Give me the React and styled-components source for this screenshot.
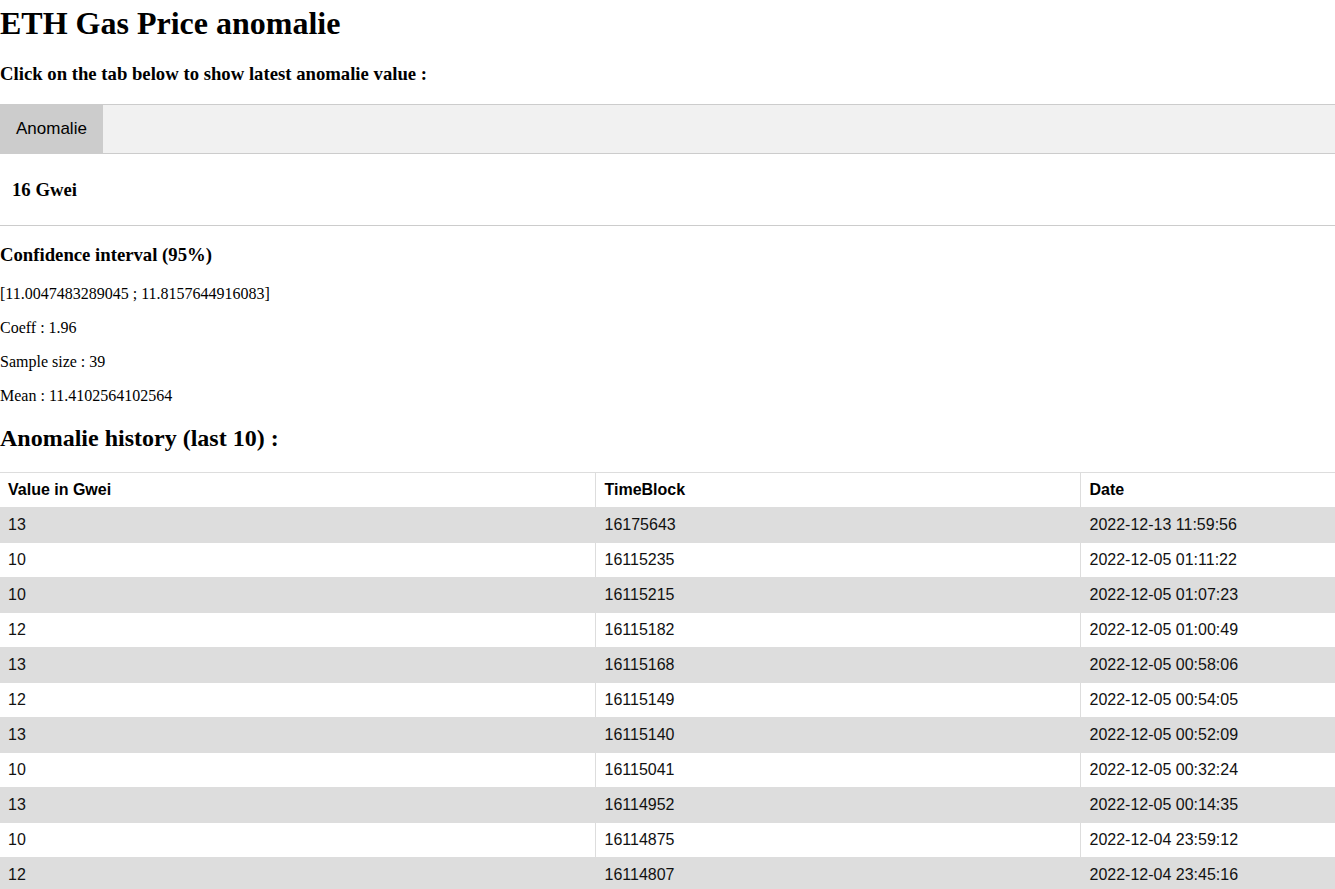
import React, { useState } from 'react';
import styled, { createGlobalStyle } from 'styled-components';

const GlobalStyle = createGlobalStyle`
  html, body {
    margin: 0;
    padding: 0;
    overflow: hidden;
    background: #fff;
    color: #000;
    font-family: "Liberation Serif", "Times New Roman", serif;
  }
`;

const Page = styled.div`
  width: 100%;
`;

const Title = styled.h1`
  font-size: 32px;
  font-weight: bold;
  margin: 5px 0 21.44px;
`;

const SubTitle = styled.h3`
  font-size: 18.72px;
  font-weight: bold;
  margin: 18.72px 0;
`;

const SectionTitle = styled.h2`
  font-size: 24px;
  font-weight: bold;
  margin: 19.92px 0;
`;

const Text = styled.p`
  font-size: 16px;
  margin: 16px 0;
`;

const TabBar = styled.div`
  overflow: hidden;
  border-top: 1px solid #ccc;
  border-bottom: 1px solid #ccc;
  background-color: #f1f1f1;
  display: flex;
`;

const TabButton = styled.button`
  background-color: ${(p) => (p.$active ? '#ccc' : 'inherit')};
  border: none;
  outline: none;
  cursor: pointer;
  padding: 14px 16px;
  font-family: "Liberation Sans", Arial, sans-serif;
  font-size: 17px;
  color: #000;
  line-height: normal;
  &:hover {
    background-color: #ddd;
  }
`;

const TabContent = styled.div`
  padding: 6px 12px 5px;
  border-bottom: 1px solid #ccc;
`;

const Table = styled.table`
  border-collapse: collapse;
  border-spacing: 0;
  width: 100%;
  border-top: 1px solid #ddd;
  font-family: "Liberation Sans", Arial, sans-serif;
  font-size: 16px;
`;

const Row = styled.tr`
  background-color: ${(p) => (p.$striped ? '#ddd' : '#fff')};
`;

const HeadCell = styled.th`
  text-align: left;
  padding: 8px 8px 8px 9px;
  font-weight: bold;
  border-left: 1px solid #ddd;
  border-bottom: 1px solid #ddd;
  &:first-child {
    border-left: none;
    padding-left: 8px;
  }
`;

const Cell = styled.td`
  text-align: left;
  padding: 8px 8px 8px 9px;
  color: #111;
  border-left: 1px solid #ddd;
  border-bottom: 1px solid #ddd;
  &:first-child {
    border-left: none;
    padding-left: 8px;
  }
`;

const history = [
  [13, 16175643, '2022-12-13 11:59:56'],
  [10, 16115235, '2022-12-05 01:11:22'],
  [10, 16115215, '2022-12-05 01:07:23'],
  [12, 16115182, '2022-12-05 01:00:49'],
  [13, 16115168, '2022-12-05 00:58:06'],
  [12, 16115149, '2022-12-05 00:54:05'],
  [13, 16115140, '2022-12-05 00:52:09'],
  [10, 16115041, '2022-12-05 00:32:24'],
  [13, 16114952, '2022-12-05 00:14:35'],
  [10, 16114875, '2022-12-04 23:59:12'],
  [12, 16114807, '2022-12-04 23:45:16'],
];

const App = () => {
  const [open, setOpen] = useState(true);
  return (
    <Page>
      <GlobalStyle />
      <Title>ETH Gas Price anomalie</Title>
      <SubTitle>Click on the tab below to show latest anomalie value :</SubTitle>
      <TabBar>
        <TabButton $active={open} onClick={() => setOpen(!open)}>
          Anomalie
        </TabButton>
      </TabBar>
      {open && (
        <TabContent>
          <SubTitle>16 Gwei</SubTitle>
        </TabContent>
      )}
      <SubTitle>Confidence interval (95%)</SubTitle>
      <Text>[11.0047483289045 ; 11.8157644916083]</Text>
      <Text>Coeff : 1.96</Text>
      <Text>Sample size : 39</Text>
      <Text>Mean : 11.4102564102564</Text>
      <SectionTitle>Anomalie history (last 10) :</SectionTitle>
      <Table>
        <colgroup>
          <col style={{ width: '595px' }} />
          <col style={{ width: '485px' }} />
          <col />
        </colgroup>
        <thead>
          <Row>
            <HeadCell>Value in Gwei</HeadCell>
            <HeadCell>TimeBlock</HeadCell>
            <HeadCell>Date</HeadCell>
          </Row>
        </thead>
        <tbody>
          {history.map(([value, block, date], i) => (
            <Row key={block} $striped={i % 2 === 0}>
              <Cell>{value}</Cell>
              <Cell>{block}</Cell>
              <Cell>{date}</Cell>
            </Row>
          ))}
        </tbody>
      </Table>
    </Page>
  );
};

export default App;
